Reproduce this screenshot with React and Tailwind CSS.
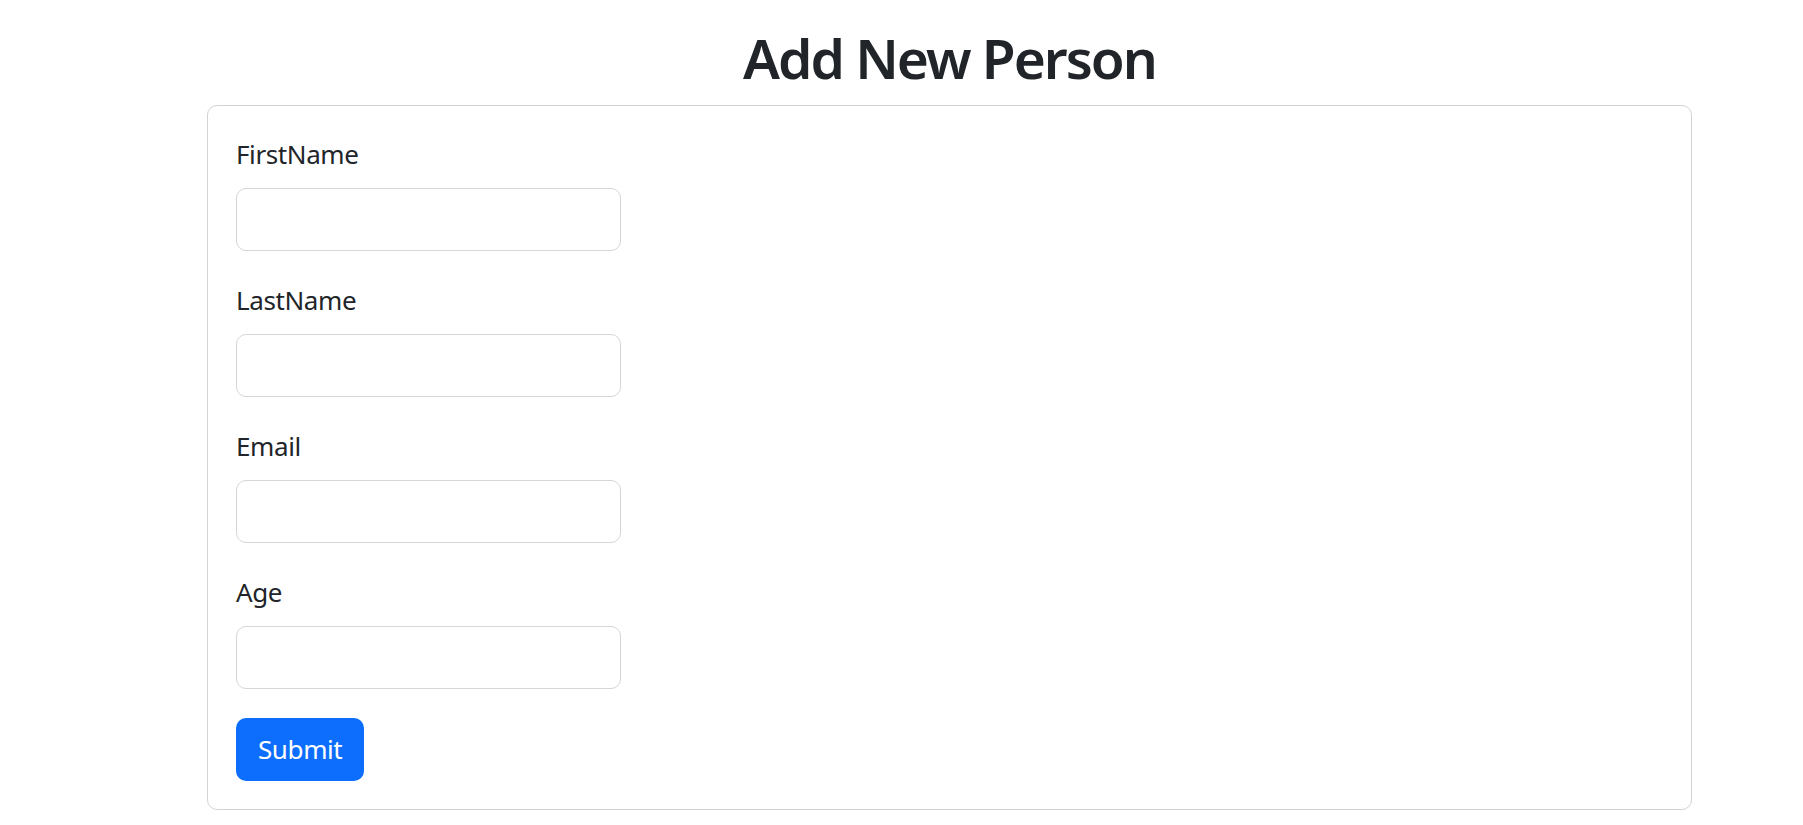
import { useState } from 'react';

const FIELDS = [
  { name: 'firstName', label: 'FirstName', type: 'text' },
  { name: 'lastName', label: 'LastName', type: 'text' },
  { name: 'email', label: 'Email', type: 'email' },
  { name: 'age', label: 'Age', type: 'number' },
];

export default function App() {
  const [person, setPerson] = useState({ firstName: '', lastName: '', email: '', age: '' });

  function handleChange(e) {
    setPerson({ ...person, [e.target.name]: e.target.value });
  }

  function handleSubmit(e) {
    e.preventDefault();
  }

  return (
    <div className="min-h-screen bg-white font-['Noto_Sans',sans-serif] text-[#212529]">
      <div className="ml-[207px] mr-[111px] pt-[23px]">
        <h1 className="mb-[12px] text-center text-[55px] font-semibold leading-[70px] tracking-[-2px]">
          Add New Person
        </h1>

        {/* Card */}
        <form onSubmit={handleSubmit} className="rounded-[10px] border border-[#d3d3d3] p-[28px]">
          {FIELDS.map((f) => (
            <div key={f.name} className="mb-[29px]">
              <label htmlFor={f.name} className="mb-[13px] block text-[26px] leading-[41px] tracking-[-0.4px]">
                {f.label}
              </label>
              <input
                id={f.name}
                name={f.name}
                type={f.type}
                value={person[f.name]}
                onChange={handleChange}
                className="block h-[63px] w-[385px] rounded-[10px] border border-[#d6d6d6] px-[20px] text-[26px] outline-none"
              />
            </div>
          ))}
          <button
            type="submit"
            className="h-[63px] rounded-[10px] bg-[#0d6efd] px-[22px] text-[26px] tracking-[-0.4px] text-white"
          >
            Submit
          </button>
        </form>
      </div>
    </div>
  );
}
